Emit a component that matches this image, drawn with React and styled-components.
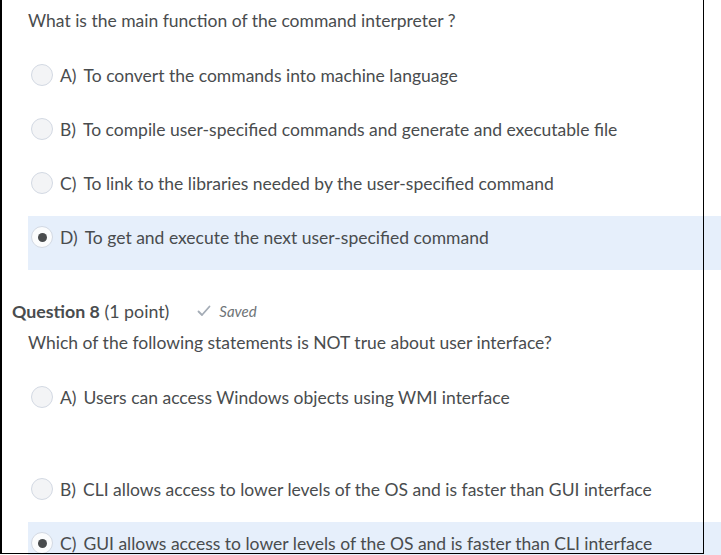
import React from "react";
import styled, { createGlobalStyle } from "styled-components";

const GlobalStyle = createGlobalStyle`
  html, body {
    margin: 0;
    padding: 0;
    background: #ffffff;
  }
  body {
    font-family: Lato, "Open Sans", sans-serif;
    color: #494c4e;
  }
`;

const questions = [
  {
    id: 7,
    text: "What is the main function of the command interpreter ?",
    options: [
      { label: "A)", text: "To convert the commands into machine language" },
      { label: "B)", text: "To compile user-specified commands and generate and executable file" },
      { label: "C)", text: "To link to the libraries needed by the user-specified command" },
      { label: "D)", text: "To get and execute the next user-specified command", selected: true },
    ],
  },
  {
    id: 8,
    points: "(1 point)",
    saved: true,
    text: "Which of the following statements is NOT true about user interface?",
    options: [
      { label: "A)", text: "Users can access Windows objects using WMI interface", tall: true },
      { label: "B)", text: "CLI allows access to lower levels of the OS and is faster than GUI interface" },
      {
        label: "C)",
        text: "GUI allows access to lower levels of the OS and is faster than CLI interface",
        selected: true,
      },
    ],
  },
];

const CheckIcon = () => (
  <svg width="14" height="12" viewBox="0 0 14 12" fill="none">
    <polyline
      points="1.5,6.5 5,10 12.5,1.5"
      stroke="#a4acb6"
      strokeWidth="1.8"
      strokeLinecap="round"
      strokeLinejoin="round"
    />
  </svg>
);

const Radio = ({ checked }) => (
  <RadioCircle checked={checked}>{checked && <RadioDot />}</RadioCircle>
);

const Question = ({ q }) => (
  <QuestionBlock>
    {q.points && (
      <QuestionHeader>
        <Title>
          <strong>Question {q.id}</strong> {q.points}
        </Title>
        {q.saved && (
          <SavedTag>
            <CheckIcon />
            <em>Saved</em>
          </SavedTag>
        )}
      </QuestionHeader>
    )}
    <QuestionText>{q.text}</QuestionText>
    <OptionList>
      {q.options.map((o) => (
        <OptionRow key={o.label} selected={o.selected} tall={o.tall}>
          <Radio checked={o.selected} />
          <OptionLabel>
            <span>{o.label}</span>
            {o.text}
          </OptionLabel>
        </OptionRow>
      ))}
    </OptionList>
  </QuestionBlock>
);

export default function App() {
  return (
    <>
      <GlobalStyle />
      <Screen>
        <Page>
          {questions.map((q) => (
            <Question key={q.id} q={q} />
          ))}
        </Page>
        <Frame />
      </Screen>
    </>
  );
}

const Screen = styled.div`
  position: relative;
  width: 721px;
  height: 555px;
  overflow: hidden;
`;

const Page = styled.div`
  padding-top: 9px;
  display: flex;
  flex-direction: column;
  gap: 29px;
`;

const Frame = styled.div`
  position: absolute;
  top: 0;
  left: 0;
  width: 704px;
  height: 554px;
  box-sizing: border-box;
  border-left: 2px solid #000;
  border-right: 1px solid #000;
  border-bottom: 1px solid #000;
  pointer-events: none;
`;

const QuestionBlock = styled.section`
  display: flex;
  flex-direction: column;
`;

const QuestionHeader = styled.div`
  display: flex;
  align-items: center;
  padding-left: 12px;
  line-height: 24px;
  margin-bottom: 8px;
`;

const Title = styled.span`
  font-size: 17.8px;
  & strong {
    font-weight: 700;
  }
`;

const SavedTag = styled.span`
  display: inline-flex;
  align-items: center;
  gap: 8px;
  margin-left: 28px;
  font-size: 15px;
  color: #6e7477;
`;

const QuestionText = styled.div`
  padding-left: 28px;
  font-size: 17.5px;
  line-height: 24px;
  margin-bottom: 21px;
`;

const OptionList = styled.div`
  margin-left: 28px;
  display: flex;
  flex-direction: column;
`;

const OptionRow = styled.div`
  height: ${(p) => (p.tall ? "92px" : "54px")};
  box-sizing: border-box;
  padding: 10px 0 0 3px;
  display: flex;
  align-items: flex-start;
  gap: 7px;
  background: ${(p) => (p.selected ? "#e6effb" : "transparent")};
`;

const RadioCircle = styled.span`
  flex: none;
  width: 20px;
  height: 20px;
  border-radius: 50%;
  border: 1px solid #d3d9e3;
  background: ${(p) => (p.checked ? "#fbfcfd" : "#f3f4f6")};
  display: flex;
  align-items: center;
  justify-content: center;
`;

const RadioDot = styled.span`
  width: 9px;
  height: 9px;
  border-radius: 50%;
  background: #494c4e;
`;

const OptionLabel = styled.div`
  padding-top: 1px;
  font-size: 17.5px;
  line-height: 22px;
  & > span {
    margin-right: 7px;
  }
`;
